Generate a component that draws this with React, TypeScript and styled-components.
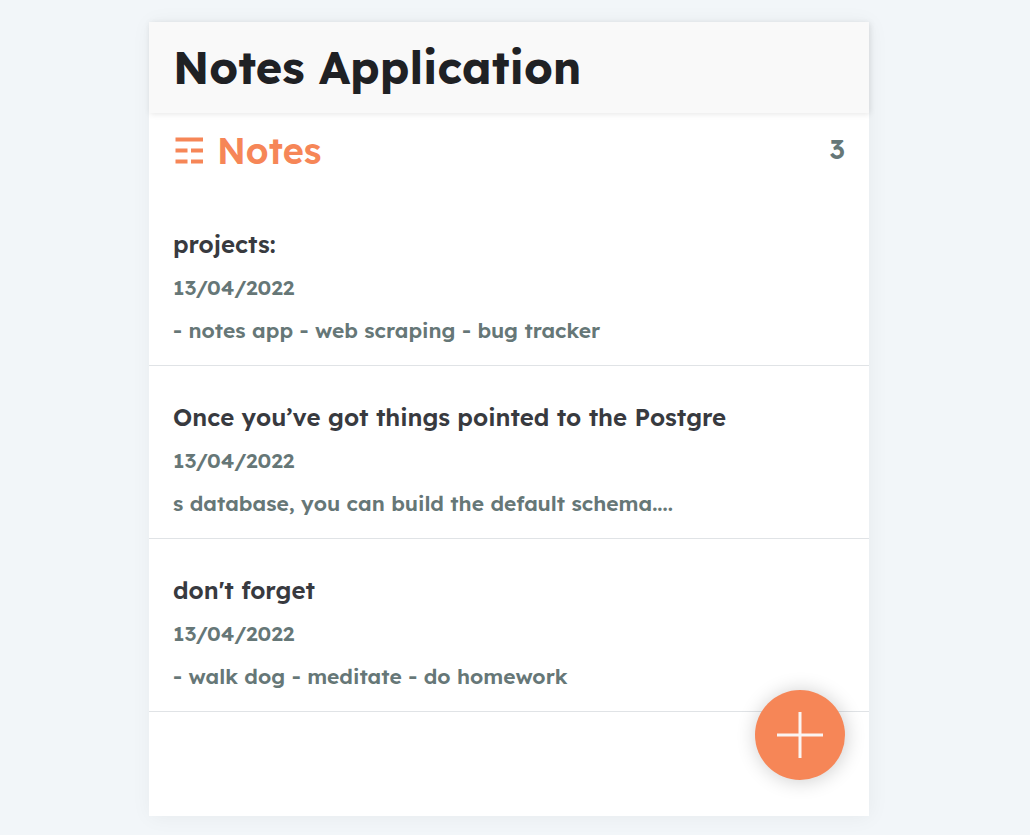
import React from "react";
import styled, { createGlobalStyle } from "styled-components";

const GlobalStyle = createGlobalStyle`
  * { box-sizing: border-box; }
  body {
    margin: 0;
    background: #f2f6f9;
    font-family: Lexend, Inter, "Open Sans", sans-serif;
  }
  h1, h2, h3, p, ul { margin: 0; padding: 0; }
`;

const Page = styled.div`
  display: flex;
  justify-content: center;
  min-height: 100vh;
  padding: 22px 12px 19px 0;
`;

const Card = styled.div`
  position: relative;
  width: 100%;
  max-width: 720px;
  background: #ffffff;
  box-shadow: 1px 1px 20px rgba(0, 0, 0, 0.05);
`;

const Header = styled.header`
  display: flex;
  align-items: center;
  padding: 15px 24px 16px;
  background: #f9f9f9;
  box-shadow: 1px 1px 6px rgba(0, 0, 0, 0.1);
`;

const AppTitle = styled.h1`
  font-size: 45px;
  line-height: 60px;
  font-weight: 700;
  color: #1f2124;
`;

const ListHeader = styled.div`
  display: flex;
  align-items: flex-start;
  justify-content: space-between;
  padding: 14px 24px 18px;
`;

const ListTitle = styled.h2`
  display: flex;
  align-items: center;
  gap: 14px;
  font-size: 36px;
  line-height: 48px;
  font-weight: 600;
  color: #f68657;
`;

const Count = styled.p`
  font-size: 27px;
  line-height: 44px;
  font-weight: 600;
  color: #667777;
`;

const List = styled.ul`
  list-style: none;
`;

const NoteLink = styled.a`
  display: block;
  padding: 30px 24px 13px;
  border-bottom: 1px solid #e0e3e6;
  color: inherit;
  text-decoration: none;
`;

const NoteTitle = styled.h3`
  font-size: 24px;
  line-height: 43px;
  font-weight: 600;
  color: #383a3f;
`;

const NoteText = styled.p`
  font-size: 21px;
  line-height: 43px;
  font-weight: 600;
  color: #667777;
`;

const AddButton = styled.button`
  position: absolute;
  right: 24px;
  bottom: 36px;
  display: flex;
  align-items: center;
  justify-content: center;
  width: 90px;
  height: 90px;
  padding: 0;
  border: 0;
  border-radius: 50%;
  background: #f68657;
  box-shadow: 1px 1px 20px rgba(0, 0, 0, 0.2);
  cursor: pointer;
`;

const notes = [
  { title: "projects:", date: "13/04/2022", text: "- notes app - web scraping - bug tracker" },
  {
    title: "Once you’ve got things pointed to the Postgre",
    date: "13/04/2022",
    text: "s database, you can build the default schema....",
  },
  { title: "don't forget", date: "13/04/2022", text: "- walk dog - meditate - do homework" },
];

const TrigramIcon = () => (
  <svg width="30" height="28" viewBox="0 0 30 28" fill="currentColor" aria-hidden="true">
    <path d="M2.5 0.5h27.5v4H2.5zM2.5 11.5h12v4H2.5zM18 11.5h12v4H18zM2.5 22.5h12v4H2.5zM18 22.5h12v4H18z" />
  </svg>
);

const PlusIcon = () => (
  <svg width="46" height="46" viewBox="0 0 46 46" fill="none" stroke="#fbf4f2" strokeWidth="3" aria-hidden="true">
    <path d="M0 23h46M23 0v46" />
  </svg>
);

export default function App() {
  return (
    <Page>
      <GlobalStyle />
      <Card>
        <Header>
          <AppTitle>Notes Application</AppTitle>
        </Header>
        <main>
          <ListHeader>
            <ListTitle>
              <TrigramIcon />
              Notes
            </ListTitle>
            <Count>{notes.length}</Count>
          </ListHeader>
          <List>
            {notes.map((note) => (
              <li key={note.title}>
                <NoteLink href="#">
                  <NoteTitle>{note.title}</NoteTitle>
                  <NoteText>{note.date}</NoteText>
                  <NoteText>{note.text}</NoteText>
                </NoteLink>
              </li>
            ))}
          </List>
        </main>
        <AddButton type="button" aria-label="Add note">
          <PlusIcon />
        </AddButton>
      </Card>
    </Page>
  );
}
